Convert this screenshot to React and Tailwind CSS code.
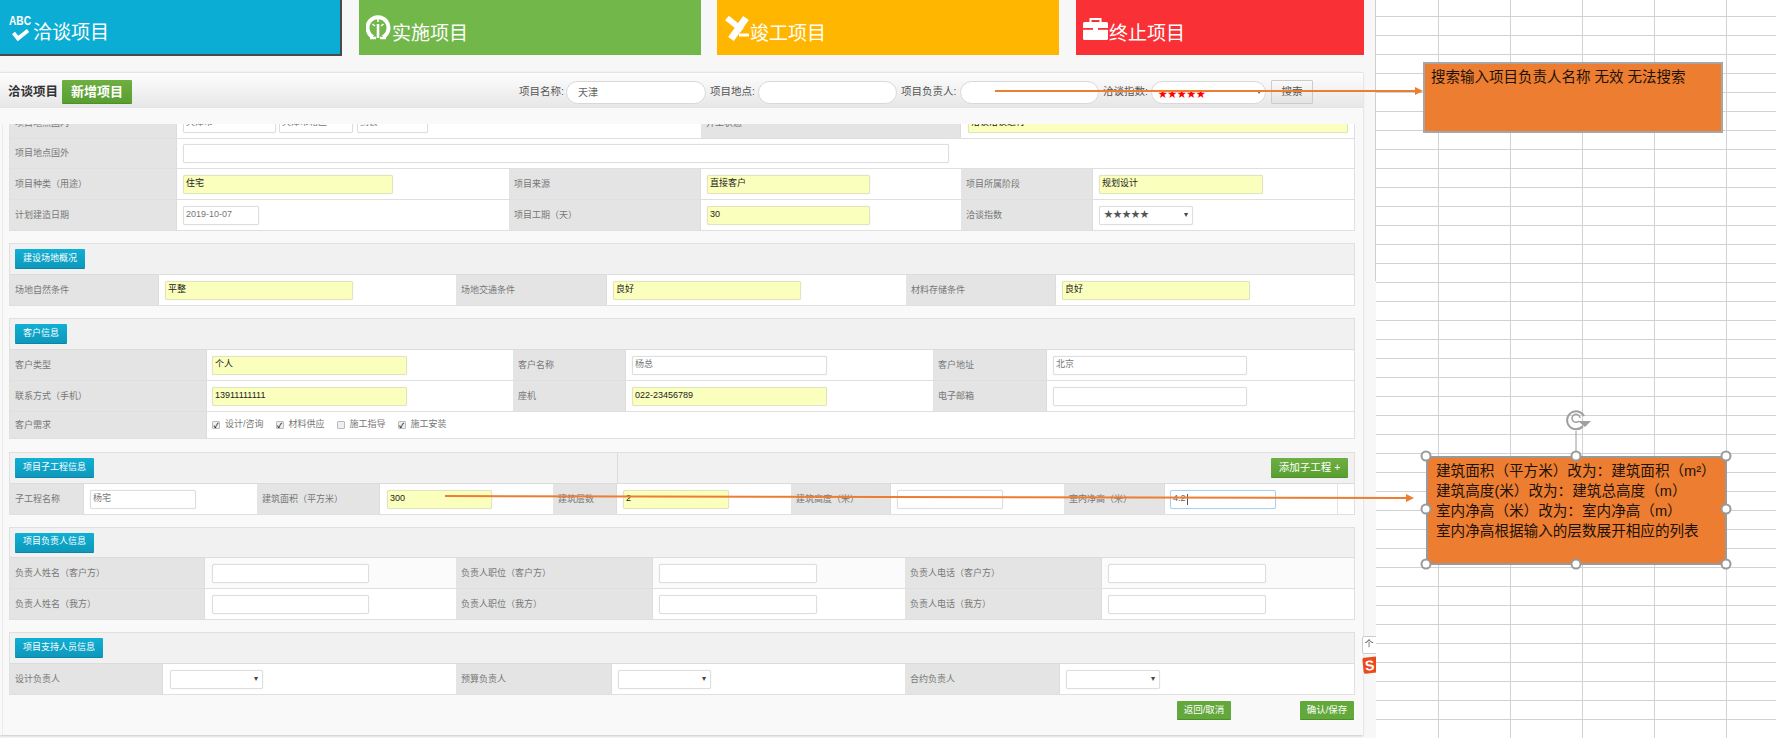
import React from "react";

function Label({ className = "", children }) {
  return (
    <div className={"flex h-full shrink-0 items-center border-r border-[#dcdcdc] bg-[#e4e4e4] pt-px pl-[5px] text-[9px] text-[#777] whitespace-nowrap " + className}>
      {children}
    </div>
  );
}

function Cell({ className = "", children }) {
  return <div className={"flex h-full shrink-0 items-center " + className}>{children}</div>;
}

function Field({ className = "", yellow, focus, children }) {
  const tone = focus
    ? "border-[#a9d0f2] bg-white"
    : yellow
    ? "border-[#e2e4bb] bg-[#fbffbd] text-[#222]"
    : "border-[#dedede] bg-white text-[#777]";
  return (
    <div className={"flex h-[19px] shrink-0 items-center rounded-[2px] border pl-[2px] text-[9px] whitespace-nowrap shadow-[0_0_1px_#d8d8d8] " + tone + " " + className}>
      {children}
    </div>
  );
}

function Select({ className = "", children }) {
  return (
    <div className={"flex h-[19px] shrink-0 items-center justify-between rounded-[2px] border border-[#dedede] bg-white px-[4px] text-[9px] text-[#555] shadow-[0_0_1px_#d8d8d8] " + className}>
      <span>{children}</span>
      <span className="text-[8px] text-[#444]">▾</span>
    </div>
  );
}

function Row({ className = "h-[31px]", children }) {
  return <div className={"flex items-center border-b border-[#dfdfdf] bg-white " + className}>{children}</div>;
}

function Tag({ children }) {
  return (
    <div className="ml-[5px] flex h-[20px] items-center rounded-[1px] border-b border-[#0b86a6] bg-gradient-to-b from-[#10b0d4] to-[#0e98bb] px-[8px] text-[9px] whitespace-nowrap text-white">
      {children}
    </div>
  );
}

function Section({ title, headH = "h-[31px]", extra, className = "mt-[12px]", children }) {
  return (
    <div className={"w-[1346px] border-x border-t border-[#e0e0e0] " + className}>
      <div className={"flex items-center justify-between border-b border-[#dcdcdc] bg-[#f1f1f1] " + headH}>
        <Tag>{title}</Tag>
        {extra}
      </div>
      {children}
    </div>
  );
}

function Check({ on, children }) {
  return (
    <div className="mr-[12px] flex items-center text-[9px] text-[#777]">
      <span className="mr-[5px] flex h-[8px] w-[8px] items-center justify-center rounded-[1px] border border-[#bbb] bg-[#efefef] text-[7px] leading-none font-bold text-[#111]">
        {on ? "✓" : ""}
      </span>
      {children}
    </div>
  );
}

function SearchLabel({ className = "", children }) {
  return <div className={"shrink-0 text-[10.5px] whitespace-nowrap text-[#555] " + className}>{children}</div>;
}

function Tab({ className, icon, text }) {
  return (
    <div className={"flex h-[55px] shrink-0 items-center pt-[11px] text-[19px] leading-none text-white " + className}>
      {icon}
      <span>{text}</span>
    </div>
  );
}

const AbcIcon = (
  <svg width="25" height="36" viewBox="0 0 25 36" className="shrink-0">
    <text x="1" y="10" fill="#fff" fontSize="13" fontWeight="700" fontFamily="Liberation Sans" textLength="22" lengthAdjust="spacingAndGlyphs">ABC</text>
    <path d="M5.5 18 L10 23.5 L20 15.5" fill="none" stroke="#fff" strokeWidth="3.8" />
  </svg>
);
const GaugeIcon = (
  <svg width="26" height="36" viewBox="0 0 26 36" className="shrink-0">
    <path d="M7 22 A10.5 10.5 0 1 1 17 22" fill="none" stroke="#fff" strokeWidth="4" />
    <path d="M4 23 H10 M14 23 H20" stroke="#fff" strokeWidth="2.6" />
    <path d="M12 9 V23" stroke="#fff" strokeWidth="2.6" />
    <path d="M6.5 9 L9 11 M17.5 9 L15 11 M12 4 V7" stroke="#fff" strokeWidth="1.6" />
  </svg>
);
const PlaneIcon = (
  <svg width="26" height="36" viewBox="0 0 26 36" className="shrink-0">
    <path d="M22 3 L7 24" stroke="#fff" strokeWidth="7" />
    <path d="M3 3 L18 15" stroke="#fff" strokeWidth="6" />
    <path d="M15 20 L25 20" stroke="#fff" strokeWidth="3" />
  </svg>
);
const CaseIcon = (
  <svg width="26" height="36" viewBox="0 0 26 36" className="shrink-0">
    <rect x="7.5" y="4" width="10" height="5" fill="none" stroke="#fff" strokeWidth="2" />
    <rect x="0" y="7" width="25" height="18" rx="1.5" fill="#fff" />
    <rect x="0" y="13" width="25" height="1.8" fill="#f93136" />
    <rect x="10" y="12" width="5" height="4" fill="#fff" />
  </svg>
);

function Handle({ x, y }) {
  return <circle cx={x} cy={y} r="4.5" fill="#fff" stroke="#9a9a9a" strokeWidth="2" />;
}

function Overlay() {
  return (
    <svg width="1776" height="738" viewBox="0 0 1776 738" className="pointer-events-none absolute top-0 left-0">
      <path d="M995 91 H1415" stroke="#ed7d31" strokeWidth="2" />
      <path d="M1415 87 L1423 91 L1415 95 Z" fill="#ed7d31" />
      <path d="M445 496 L1406 498" stroke="#ed7d31" strokeWidth="2" />
      <path d="M1406 494 L1414 498 L1406 502 Z" fill="#ed7d31" />
      <path d="M1576 431 V456" stroke="#9a9a9a" strokeWidth="1" />
      <path d="M1583 426 A9 9 0 1 1 1584 416" fill="none" stroke="#a0a0a0" strokeWidth="2" />
      <path d="M1579 421 A4 4 0 1 1 1580 418" fill="none" stroke="#a0a0a0" strokeWidth="1.5" />
      <path d="M1578 421 H1591 L1585 427 Z" fill="#a0a0a0" />
      <Handle x={1426} y={456} />
      <Handle x={1576} y={456} />
      <Handle x={1726} y={456} />
      <Handle x={1426} y={509} />
      <Handle x={1726} y={509} />
      <Handle x={1426} y={564} />
      <Handle x={1576} y={564} />
      <Handle x={1726} y={564} />
    </svg>
  );
}

export default function App() {
  return (
    <div className="relative flex h-[738px] w-[1776px] overflow-hidden bg-white font-['Liberation_Sans','Noto_Sans_CJK_SC',sans-serif]">
      <div className="h-[738px] w-[1376px] shrink-0 bg-[#f7f7f7]">
        {/* Top tabs */}
        <div className="flex h-[72px] items-start">
          <Tab className="h-[56px] w-[342px] border-r-2 border-b-2 border-[#4a4a4a] bg-[#0cadd5] pl-[8px]" icon={AbcIcon} text="洽谈项目" />
          <Tab className="ml-[17px] w-[342px] bg-[#72b74a] pl-[7px]" icon={GaugeIcon} text="实施项目" />
          <Tab className="ml-[16px] w-[342px] bg-[#ffb600] pl-[7px]" icon={PlaneIcon} text="竣工项目" />
          <Tab className="ml-[17px] w-[288px] bg-[#f93136] pl-[7px]" icon={CaseIcon} text="终止项目" />
        </div>

        {/* Panel */}
        <div className="h-[663px] w-[1363px] bg-[#f9f9f9] shadow-[0_1px_2px_#c8c8c8]">
          <div className="flex h-[36px] items-center border-y border-[#e4e4e4] bg-gradient-to-b from-[#fdfdfd] to-[#e7e7e7] pt-[4px]">
            <div className="ml-[8px] w-[50px] shrink-0 text-[12.5px] font-bold whitespace-nowrap text-[#333]">洽谈项目</div>
            <div className="ml-[4px] flex h-[24px] w-[70px] shrink-0 items-center justify-center rounded-[1px] border-b border-[#4d8f2a] bg-gradient-to-b from-[#6fae42] to-[#589f30] text-[13px] font-bold text-white">新增项目</div>
            <SearchLabel className="ml-[387px] w-[47px]">项目名称:</SearchLabel>
            <div className="flex h-[23px] w-[140px] shrink-0 items-center rounded-full border border-[#d8d8d8] bg-white pl-[11px] text-[10px] text-[#666]">天津</div>
            <SearchLabel className="ml-[4px] w-[48px]">项目地点:</SearchLabel>
            <div className="h-[23px] w-[139px] shrink-0 rounded-full border border-[#d8d8d8] bg-white" />
            <SearchLabel className="ml-[4px] w-[59px]">项目负责人:</SearchLabel>
            <div className="h-[23px] w-[139px] shrink-0 rounded-full border border-[#d8d8d8] bg-white" />
            <SearchLabel className="ml-[4px] w-[48px]">洽谈指数:</SearchLabel>
            <div className="flex h-[23px] w-[115px] shrink-0 items-center justify-between rounded-full border border-[#d8d8d8] bg-white pr-[4px] pl-[6px] text-[9.5px] text-[#f00]">
              <span className="pt-[4px] leading-none">★★★★★</span>
              <span className="text-[8px] text-[#444]">▾</span>
            </div>
            <div className="ml-[5px] flex h-[24px] w-[42px] shrink-0 items-center justify-center rounded-[1px] border border-[#ccc] bg-gradient-to-b from-[#fafafa] to-[#e4e4e4] text-[10.5px] text-[#555]">搜索</div>
          </div>

          <div className="h-[16px]" />

          <div className="ml-[2px] h-[611px] overflow-hidden border-l border-[#ececec] pl-[6px]">
            {/* Project info, scrolled under the header */}
            <div className="-mt-[16px] w-[1346px] border-x border-[#e0e0e0]">
              <Row>
                <Label className="w-[167px]">项目地点国内</Label>
                <Cell className="w-[524px] pl-[6px]">
                  <Field className="w-[93px]">天津市</Field>
                  <Field className="ml-[3px] w-[74px]">天津市辖区</Field>
                  <Field className="ml-[4px] w-[71px]">蓟县</Field>
                </Cell>
                <Label className="w-[260px]">开工状态</Label>
                <Cell className="pl-[7px]">
                  <Field yellow className="w-[380px]">洽谈洽谈进行</Field>
                </Cell>
              </Row>
              <Row className="h-[30px]">
                <Label className="w-[167px]">项目地点国外</Label>
                <Cell className="pl-[6px]">
                  <Field className="w-[766px]" />
                </Cell>
              </Row>
              <Row>
                <Label className="w-[167px]">项目种类（用途）</Label>
                <Cell className="w-[332px] pl-[6px]">
                  <Field yellow className="w-[210px]">住宅</Field>
                </Cell>
                <Label className="w-[192px]">项目来源</Label>
                <Cell className="w-[260px] pl-[6px]">
                  <Field yellow className="w-[163px]">直接客户</Field>
                </Cell>
                <Label className="w-[132px]">项目所属阶段</Label>
                <Cell className="pl-[6px]">
                  <Field yellow className="w-[164px]">规划设计</Field>
                </Cell>
              </Row>
              <Row>
                <Label className="w-[167px]">计划建造日期</Label>
                <Cell className="w-[332px] pl-[6px]">
                  <Field className="w-[76px]">2019-10-07</Field>
                </Cell>
                <Label className="w-[192px]">项目工期（天）</Label>
                <Cell className="w-[260px] pl-[6px]">
                  <Field yellow className="w-[163px]">30</Field>
                </Cell>
                <Label className="w-[132px]">洽谈指数</Label>
                <Cell className="pl-[6px]">
                  <Select className="w-[94px]">★★★★★</Select>
                </Cell>
              </Row>
            </div>

            <Section title="建设场地概况">
              <Row>
                <Label className="w-[149px]">场地自然条件</Label>
                <Cell className="w-[297px] pl-[6px]">
                  <Field yellow className="w-[188px]">平整</Field>
                </Cell>
                <Label className="w-[151px]">场地交通条件</Label>
                <Cell className="w-[299px] pl-[6px]">
                  <Field yellow className="w-[188px]">良好</Field>
                </Cell>
                <Label className="w-[150px]">材料存储条件</Label>
                <Cell className="pl-[6px]">
                  <Field yellow className="w-[188px]">良好</Field>
                </Cell>
              </Row>
            </Section>

            <Section title="客户信息">
              <Row>
                <Label className="w-[197px]">客户类型</Label>
                <Cell className="w-[306px] pl-[5px]">
                  <Field yellow className="w-[195px]">个人</Field>
                </Cell>
                <Label className="w-[113px]">客户名称</Label>
                <Cell className="w-[307px] pl-[6px]">
                  <Field className="w-[195px]">杨总</Field>
                </Cell>
                <Label className="w-[114px]">客户地址</Label>
                <Cell className="pl-[6px]">
                  <Field className="w-[194px]">北京</Field>
                </Cell>
              </Row>
              <Row>
                <Label className="w-[197px]">联系方式（手机）</Label>
                <Cell className="w-[306px] pl-[5px]">
                  <Field yellow className="w-[195px]">13911111111</Field>
                </Cell>
                <Label className="w-[113px]">座机</Label>
                <Cell className="w-[307px] pl-[6px]">
                  <Field yellow className="w-[195px]">022-23456789</Field>
                </Cell>
                <Label className="w-[114px]">电子邮箱</Label>
                <Cell className="pl-[6px]">
                  <Field className="w-[194px]" />
                </Cell>
              </Row>
              <Row className="h-[27px]">
                <Label className="w-[197px]">客户需求</Label>
                <Cell className="pl-[5px]">
                  <Check on>设计/咨询</Check>
                  <Check on>材料供应</Check>
                  <Check>施工指导</Check>
                  <Check on>施工安装</Check>
                </Cell>
              </Row>
            </Section>

            <Section
              title="项目子工程信息"
              className="mt-[13px]"
              extra={
                <div className="flex h-full w-[737px] items-center justify-end border-l border-[#dcdcdc] pr-[6px]">
                  <div className="flex h-[20px] w-[77px] items-center justify-center rounded-[1px] border-b border-[#4d8f2a] bg-gradient-to-b from-[#6fae42] to-[#589f30] text-[10.5px] text-white">添加子工程 +</div>
                </div>
              }
            >
              <Row>
                <Label className="w-[74px]">子工程名称</Label>
                <Cell className="w-[173px] pl-[6px]">
                  <Field className="w-[106px]">杨宅</Field>
                </Cell>
                <Label className="w-[123px]">建筑面积（平方米）</Label>
                <Cell className="w-[173px] pl-[7px]">
                  <Field yellow className="w-[105px]">300</Field>
                </Cell>
                <Label className="w-[64px]">建筑层数</Label>
                <Cell className="w-[174px] pl-[6px]">
                  <Field yellow className="w-[106px]">2</Field>
                </Cell>
                <Label className="w-[100px]">建筑高度（米）</Label>
                <Cell className="w-[173px] pl-[6px]">
                  <Field className="w-[106px]" />
                </Cell>
                <Label className="w-[101px]">室内净高（米）</Label>
                <Cell className="w-[173px] border-r border-[#e4e4e4] pl-[5px]">
                  <Field focus className="w-[106px] text-[#666]">4.2<span className="ml-px h-[11px] w-px bg-[#555]" /></Field>
                </Cell>
              </Row>
            </Section>

            <Section title="项目负责人信息" headH="h-[30px]">
              <Row className="h-[31px] !bg-[#fbfbfb]">
                <Label className="w-[195px]">负责人姓名（客户方）</Label>
                <Cell className="w-[251px] pl-[7px]">
                  <Field className="w-[157px]" />
                </Cell>
                <Label className="w-[197px]">负责人职位（客户方）</Label>
                <Cell className="w-[252px] pl-[6px]">
                  <Field className="w-[158px]" />
                </Cell>
                <Label className="w-[197px]">负责人电话（客户方）</Label>
                <Cell className="pl-[6px]">
                  <Field className="w-[158px]" />
                </Cell>
              </Row>
              <Row>
                <Label className="w-[195px]">负责人姓名（我方）</Label>
                <Cell className="w-[251px] pl-[7px]">
                  <Field className="w-[157px]" />
                </Cell>
                <Label className="w-[197px]">负责人职位（我方）</Label>
                <Cell className="w-[252px] pl-[6px]">
                  <Field className="w-[158px]" />
                </Cell>
                <Label className="w-[197px]">负责人电话（我方）</Label>
                <Cell className="pl-[6px]">
                  <Field className="w-[158px]" />
                </Cell>
              </Row>
            </Section>

            <Section title="项目支持人员信息">
              <Row>
                <Label className="w-[153px]">设计负责人</Label>
                <Cell className="w-[293px] pl-[7px]">
                  <Select className="w-[93px]" />
                </Cell>
                <Label className="w-[156px]">预算负责人</Label>
                <Cell className="w-[293px] pl-[6px]">
                  <Select className="w-[93px]" />
                </Cell>
                <Label className="w-[155px]">合约负责人</Label>
                <Cell className="pl-[6px]">
                  <Select className="w-[94px]" />
                </Cell>
              </Row>
            </Section>

            <div className="mt-[6px] flex w-[1345px] justify-end">
              <div className="flex h-[19px] w-[54px] items-center justify-center rounded-[1px] border-b border-[#4d8f2a] bg-[#62a83b] text-[9.5px] text-white">返回/取消</div>
              <div className="ml-[69px] flex h-[19px] w-[54px] items-center justify-center rounded-[1px] border-b border-[#4d8f2a] bg-[#62a83b] text-[9.5px] text-white">确认/保存</div>
            </div>
          </div>
        </div>
      </div>

      {/* Spreadsheet behind the annotations */}
      <div className="h-[738px] flex-1 bg-white bg-[linear-gradient(#d2d2d2_1px,transparent_1px),linear-gradient(90deg,#d2d2d2_1px,transparent_1px)] bg-[size:72px_19px] bg-[position:62px_16px]" />

      {/* Sheet edge */}
      <div className="absolute top-0 left-[1375px] h-[281px] w-px bg-[#cfcfcf]" />

      {/* Input-method widget clipped at the sheet edge */}
      <div className="absolute top-[636px] left-[1362px] h-[40px] w-[14px] overflow-hidden">
        <div className="flex h-[18px] w-[20px] items-center justify-center rounded-[2px] border border-[#ccc] bg-white pr-[6px] text-[9px] text-[#555]">个</div>
        <div className="mt-[3px] ml-px flex h-[16px] w-[18px] -rotate-6 items-start justify-start rounded-[2px] bg-[#ea4a1e] pl-[2px] text-[14px] leading-[16px] font-bold text-white">S</div>
      </div>

      {/* Annotation 1 */}
      <div className="absolute top-[62px] left-[1423px] h-[71px] w-[300px] border-2 border-[#a6a6a6] bg-[#ed7d31] pt-[3px] pl-[6px] text-[14.5px] leading-[20px] whitespace-nowrap text-[#1c1208]">
        搜索输入项目负责人名称 无效 无法搜索
      </div>

      {/* Annotation 2 */}
      <div className="absolute top-[456px] left-[1426px] h-[109px] w-[301px] border-2 border-[#9a9a9a] bg-[#ed7d31] pt-[3px] pl-[8px] text-[14.6px] leading-[20px] whitespace-nowrap text-[#1c1208]">
        <div>建筑面积（平方米）改为：建筑面积（m²）</div>
        <div>建筑高度(米）改为：建筑总高度（m）</div>
        <div>室内净高（米）改为：室内净高（m）</div>
        <div>室内净高根据输入的层数展开相应的列表</div>
      </div>

      <Overlay />
    </div>
  );
}
